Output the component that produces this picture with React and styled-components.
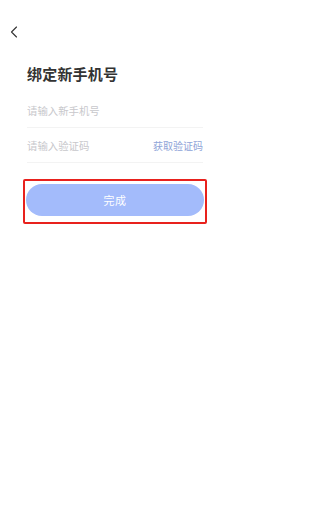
import React from 'react';
import styled, { createGlobalStyle } from 'styled-components';

const Global = createGlobalStyle`
  html, body {
    margin: 0;
    padding: 0;
    background: #fff;
  }
  body {
    font-family: "Noto Sans CJK SC", "Noto Sans", sans-serif;
  }
`;

const Page = styled.div`
  width: 229px;
  height: 508px;
  background: #fff;
  display: flex;
  flex-direction: column;
`;

const NavBar = styled.div`
  height: 44px;
  display: flex;
  align-items: center;
  padding: 20px 0 0 8px;
  box-sizing: border-box;
`;

const BackButton = styled.button`
  border: 0;
  background: none;
  padding: 0;
  width: 12px;
  height: 14px;
  display: flex;
  align-items: center;
  justify-content: center;
  color: #333;
`;

const Body = styled.div`
  padding: 0 26px 0 27px;
  display: flex;
  flex-direction: column;
`;

const Title = styled.h1`
  margin: 21px 0 10px;
  font-size: 15px;
  line-height: 18px;
  font-weight: 700;
  color: #333;
  letter-spacing: 0.2px;
`;

const Field = styled.div`
  height: 34px;
  display: flex;
  align-items: center;
  justify-content: space-between;
  border-bottom: 1px solid #f3f3f3;
`;

const Input = styled.input`
  flex: 1;
  min-width: 0;
  border: 0;
  outline: none;
  padding: 0;
  font-family: inherit;
  font-size: 10.4px;
  color: #333;
  background: transparent;
  &::placeholder {
    color: #c8c8cc;
  }
`;

const CodeLink = styled.span`
  font-size: 10px;
  color: #8fa4d8;
  white-space: nowrap;
`;

const Highlight = styled.div`
  margin: 16px -4px 0 -4px;
  border: 2px solid #e8211d;
  border-radius: 2px;
  padding: 3px 1px 6px 1px;
`;

const SubmitButton = styled.button`
  width: 100%;
  height: 32px;
  border: 0;
  border-radius: 16px;
  background: #a3bbfb;
  color: #fff;
  font-family: inherit;
  font-size: 11px;
  letter-spacing: 0.5px;
`;

export default function App() {
  return (
    <Page>
      <Global />
      <NavBar>
        <BackButton aria-label="返回">
          <svg width="8" height="12" viewBox="0 0 8 12" fill="none">
            <path d="M6.5 1 L1.5 6 L6.5 11" stroke="#333" strokeWidth="1.1" strokeLinecap="round" strokeLinejoin="round" />
          </svg>
        </BackButton>
      </NavBar>
      <Body>
        <Title>绑定新手机号</Title>
        <Field>
          <Input placeholder="请输入新手机号" />
        </Field>
        <Field>
          <Input placeholder="请输入验证码" />
          <CodeLink>获取验证码</CodeLink>
        </Field>
        <Highlight>
          <SubmitButton>完成</SubmitButton>
        </Highlight>
      </Body>
    </Page>
  );
}
